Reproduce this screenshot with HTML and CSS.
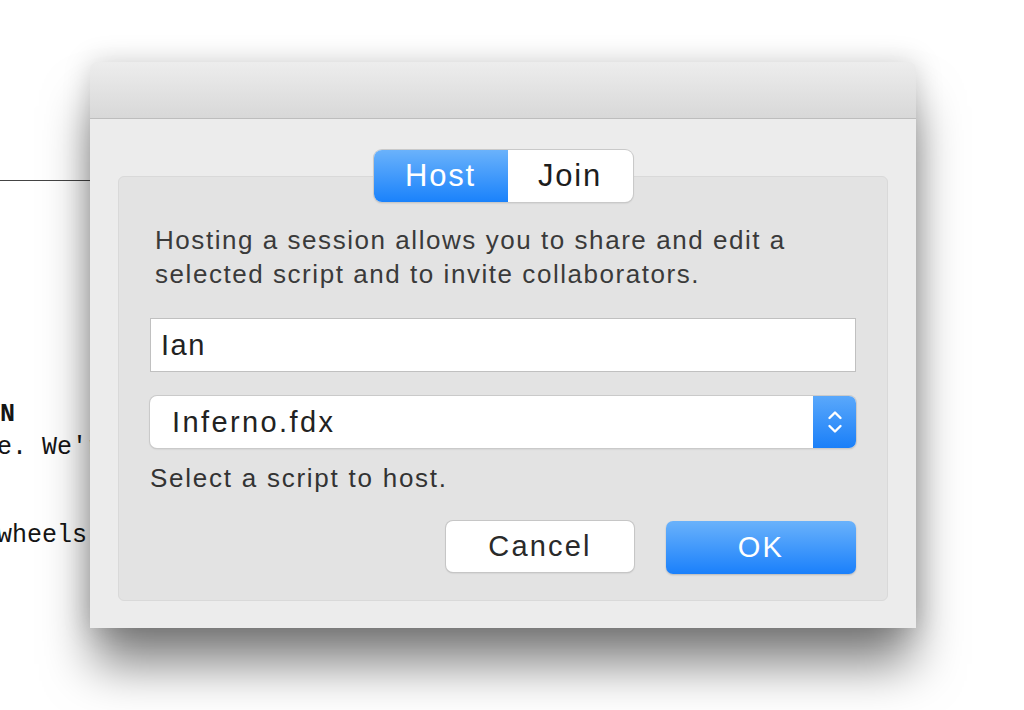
FILE: index.html
```html
<!DOCTYPE html>
<html lang="en">
<head>
    <meta charset="UTF-8">
    <meta name="viewport" content="width=device-width, initial-scale=1.0">
    <title>Collaborate</title>
    <link rel="stylesheet" href="styles.css">
</head>
<body>
    <!-- script document behind the sheet -->
    <div class="page">
        <div class="page-rule"></div>
        <div class="script">
            <div class="line cue">ROSALYN</div>
            <div class="line">nowhere. We're not going back.</div>
            <div class="line gap">their wheels in the mud.</div>
        </div>
    </div>

    <!-- collaboration sheet -->
    <div class="sheet">
        <div class="titlebar"></div>
        <div class="sheet-body">
            <div class="tabbox">
                <div class="segmented">
                    <div class="segment active">Host</div>
                    <div class="segment">Join</div>
                </div>

                <p class="info">Hosting a session allows you to share and edit a<br>selected script and to invite collaborators.</p>

                <div class="textfield">Ian</div>

                <div class="popup">
                    <span class="popup-value">Inferno.fdx</span>
                    <span class="stepper">
                        <svg width="16" height="30" viewBox="0 0 16 30">
                            <path d="M2.5 11 L8 5.5 L13.5 11" fill="none" stroke="#fff" stroke-width="2.4" stroke-linecap="round" stroke-linejoin="round"/>
                            <path d="M2.5 19 L8 24.5 L13.5 19" fill="none" stroke="#fff" stroke-width="2.4" stroke-linecap="round" stroke-linejoin="round"/>
                        </svg>
                    </span>
                </div>

                <p class="hint">Select a script to host.</p>

                <div class="actions">
                    <button class="btn">Cancel</button>
                    <button class="btn primary">OK</button>
                </div>
            </div>
        </div>
    </div>
</body>
</html>
```

FILE: styles.css
```css
html, body {
    margin: 0;
    padding: 0;
}
body {
    width: 1024px;
    height: 710px;
    overflow: hidden;
    position: relative;
    background: #fff;
    font-family: 'Liberation Sans', Arial, sans-serif;
}

/* document */
.page {
    padding-top: 180px;
}
.page-rule {
    width: 300px;
    border-top: 1px solid #444;
}
.script {
    margin-left: -93px;
    padding-top: 217px;
    font-family: 'Liberation Mono', 'Courier New', monospace;
    font-size: 25px;
    line-height: 33px;
    color: #151515;
}
.line {
    white-space: pre;
}
.cue {
    font-weight: bold;
    margin-left: 3px;
}
.gap {
    margin-top: 55px;
}

/* sheet window */
.sheet {
    position: absolute;
    left: 90px;
    top: 62px;
    width: 826px;
    background: #ececec;
    border-radius: 8px 8px 0 0;
    box-shadow: 0 40px 50px -4px rgba(0, 0, 0, 0.5),
                0 0 28px rgba(0, 0, 0, 0.18);
}
.titlebar {
    height: 56px;
    border-radius: 8px 8px 0 0;
    background: linear-gradient(#ededed, #d8d8d8);
    border-bottom: 1px solid #bdbdbd;
}
.sheet-body {
    padding: 57px 28px 27px;
}

.tabbox {
    background: #e3e3e3;
    border: 1px solid #d9d9d9;
    border-radius: 6px;
    padding: 0 31px 26px;
}

/* host / join */
.segmented {
    display: flex;
    width: 259px;
    height: 52px;
    margin: -27px auto 0;
    border-radius: 8px;
    overflow: hidden;
    background: #fff;
    box-shadow: 0 0 0 1px #c9c9c9, 0 1px 2px rgba(0, 0, 0, 0.2);
}
.segment {
    display: flex;
    align-items: center;
    justify-content: center;
    width: 125px;
    font-size: 31px;
    letter-spacing: 1.8px;
    color: #1d1d1d;
}
.segment.active {
    width: 134px;
    color: #fff;
    background: linear-gradient(#6ab2fb, #1a82fb);
}

.info {
    margin: 21px 0 0 5px;
    font-size: 26px;
    letter-spacing: 1.55px;
    line-height: 34px;
    color: #3a3a3a;
}

.textfield {
    margin-top: 27px;
    height: 52px;
    padding-left: 10px;
    display: flex;
    align-items: center;
    background: #fff;
    border: 1px solid #c0c0c0;
    font-size: 29px;
    letter-spacing: 1.5px;
    color: #222;
}

.popup {
    margin-top: 24px;
    height: 52px;
    display: flex;
    align-items: center;
    background: #fff;
    border-radius: 7px;
    box-shadow: 0 0 0 1px #cacaca, 0 1px 2px rgba(0, 0, 0, 0.18);
    overflow: hidden;
}
.popup-value {
    flex: 1;
    padding-left: 22px;
    font-size: 29px;
    letter-spacing: 2.4px;
    color: #222;
}
.stepper {
    width: 43px;
    height: 100%;
    display: flex;
    align-items: center;
    justify-content: center;
    background: linear-gradient(#5aa8fb, #1a7ff8);
}

.hint {
    margin: 15px 0 0;
    font-size: 26px;
    letter-spacing: 1.75px;
    line-height: 30px;
    color: #333;
}

.actions {
    display: flex;
    justify-content: flex-end;
    gap: 32px;
    margin-top: 28px;
}
.btn {
    width: 188px;
    height: 51px;
    border: none;
    border-radius: 7px;
    background: #fff;
    box-shadow: 0 0 0 1px #c6c6c6, 0 1px 2px rgba(0, 0, 0, 0.2);
    font-family: 'Liberation Sans', Arial, sans-serif;
    font-size: 29px;
    letter-spacing: 2.2px;
    color: #2a2a2a;
    padding: 0;
}
.btn.primary {
    width: 190px;
    height: 53px;
    color: #fff;
    background: linear-gradient(#6ab2fb, #1a80fb);
    box-shadow: 0 1px 2px rgba(0, 0, 0, 0.2);
}
```
